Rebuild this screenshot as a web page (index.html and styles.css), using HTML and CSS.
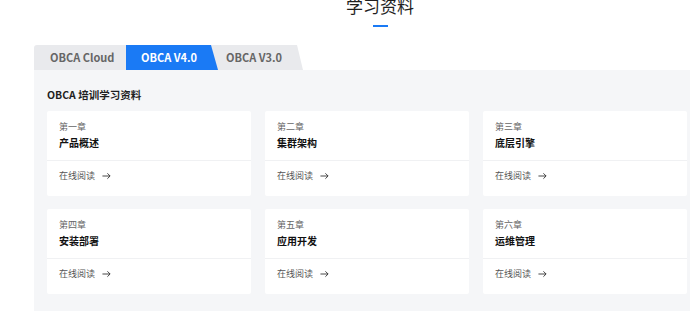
FILE: index.html
```html
<!DOCTYPE html>
<html lang="zh-CN">
<head>
    <meta charset="UTF-8">
    <meta name="viewport" content="width=device-width, initial-scale=1.0">
    <title>学习资料 - OBCA</title>
    <link rel="stylesheet" href="styles.css">
</head>
<body>
    <div class="container">
        <div class="header">
            <h2 class="page-title">学习资料</h2>
            <div class="title-bar"></div>
        </div>

        <!-- 版本切换 -->
        <div class="tabs">
            <div class="tab tab-first">OBCA Cloud</div>
            <div class="tab tab-active">OBCA V4.0</div>
            <div class="tab tab-last">OBCA V3.0</div>
        </div>

        <div class="panel">
            <h3 class="panel-title">OBCA 培训学习资料</h3>
            <div class="chapters">
                <div class="chapter">
                    <div class="chapter-head">
                        <div class="chapter-no">第一章</div>
                        <div class="chapter-name">产品概述</div>
                    </div>
                    <a class="chapter-link" href="#">在线阅读 <svg class="arrow" viewBox="0 0 10 8"><path d="M0.5 4H9M6 1l3 3-3 3"/></svg></a>
                </div>
                <div class="chapter">
                    <div class="chapter-head">
                        <div class="chapter-no">第二章</div>
                        <div class="chapter-name">集群架构</div>
                    </div>
                    <a class="chapter-link" href="#">在线阅读 <svg class="arrow" viewBox="0 0 10 8"><path d="M0.5 4H9M6 1l3 3-3 3"/></svg></a>
                </div>
                <div class="chapter">
                    <div class="chapter-head">
                        <div class="chapter-no">第三章</div>
                        <div class="chapter-name">底层引擎</div>
                    </div>
                    <a class="chapter-link" href="#">在线阅读 <svg class="arrow" viewBox="0 0 10 8"><path d="M0.5 4H9M6 1l3 3-3 3"/></svg></a>
                </div>
                <div class="chapter">
                    <div class="chapter-head">
                        <div class="chapter-no">第四章</div>
                        <div class="chapter-name">安装部署</div>
                    </div>
                    <a class="chapter-link" href="#">在线阅读 <svg class="arrow" viewBox="0 0 10 8"><path d="M0.5 4H9M6 1l3 3-3 3"/></svg></a>
                </div>
                <div class="chapter">
                    <div class="chapter-head">
                        <div class="chapter-no">第五章</div>
                        <div class="chapter-name">应用开发</div>
                    </div>
                    <a class="chapter-link" href="#">在线阅读 <svg class="arrow" viewBox="0 0 10 8"><path d="M0.5 4H9M6 1l3 3-3 3"/></svg></a>
                </div>
                <div class="chapter">
                    <div class="chapter-head">
                        <div class="chapter-no">第六章</div>
                        <div class="chapter-name">运维管理</div>
                    </div>
                    <a class="chapter-link" href="#">在线阅读 <svg class="arrow" viewBox="0 0 10 8"><path d="M0.5 4H9M6 1l3 3-3 3"/></svg></a>
                </div>
            </div>
        </div>
    </div>
</body>
</html>
```

FILE: styles.css
```css
html, body {
    overflow: hidden;
}

body {
    margin: 0;
    background: #fff;
    font-family: "Noto Sans CJK SC", "Noto Sans", sans-serif;
    color: #222;
}

.container {
    width: 692px;
    margin-left: 34px;
}

.header {
    text-align: center;
}

.page-title {
    margin: -6px 0 0 0;
    font-size: 17px;
    line-height: 24px;
    font-weight: 400;
    color: #1f1f1f;
}

.title-bar {
    width: 15px;
    height: 2px;
    margin: 7px auto 0;
    background: #1a7af5;
}

.tabs {
    display: flex;
    margin-top: 18px;
    height: 25px;
}

.tab {
    width: 92px;
    box-sizing: border-box;
    padding-left: 16px;
    font-size: 11px;
    font-weight: 700;
    line-height: 25px;
    color: #666;
    background: #e9eaed;
}

.tab-first {
    border-top-left-radius: 3px;
}

.tab-active {
    position: relative;
    z-index: 2;
    padding-left: 15px;
    color: #fff;
    background: #1a7af5;
    clip-path: polygon(0 0, calc(100% - 7px) 0, 100% 100%, 0 100%);
}

.tab-last {
    margin-left: -7px;
    padding-left: 15px;
    clip-path: polygon(0 0, calc(100% - 6px) 0, 100% 100%, 0 100%);
}

.panel {
    background: #f5f6f8;
    padding: 18px 13px 17px;
}

.panel-title {
    margin: 0 0 9px 0;
    font-size: 10.5px;
    line-height: 14px;
    font-weight: 700;
    color: #1f1f1f;
}

.chapters {
    display: grid;
    grid-template-columns: repeat(3, 204px);
    gap: 13px 14px;
}

.chapter {
    background: #fff;
    border-radius: 2px;
}

.chapter-head {
    padding: 9px 12px 9px;
    border-bottom: 1px solid #f0f1f3;
}

.chapter-no {
    font-size: 9px;
    line-height: 14px;
    color: #666;
}

.chapter-name {
    margin-top: 1px;
    font-size: 10px;
    line-height: 16px;
    font-weight: 700;
    color: #111;
}

.chapter-link {
    display: flex;
    align-items: center;
    gap: 7px;
    padding: 8px 12px 13px;
    font-size: 9px;
    line-height: 14px;
    color: #555;
    text-decoration: none;
}

.arrow {
    width: 9px;
    height: 8px;
    fill: none;
    stroke: #333;
    stroke-width: 1;
}
```
